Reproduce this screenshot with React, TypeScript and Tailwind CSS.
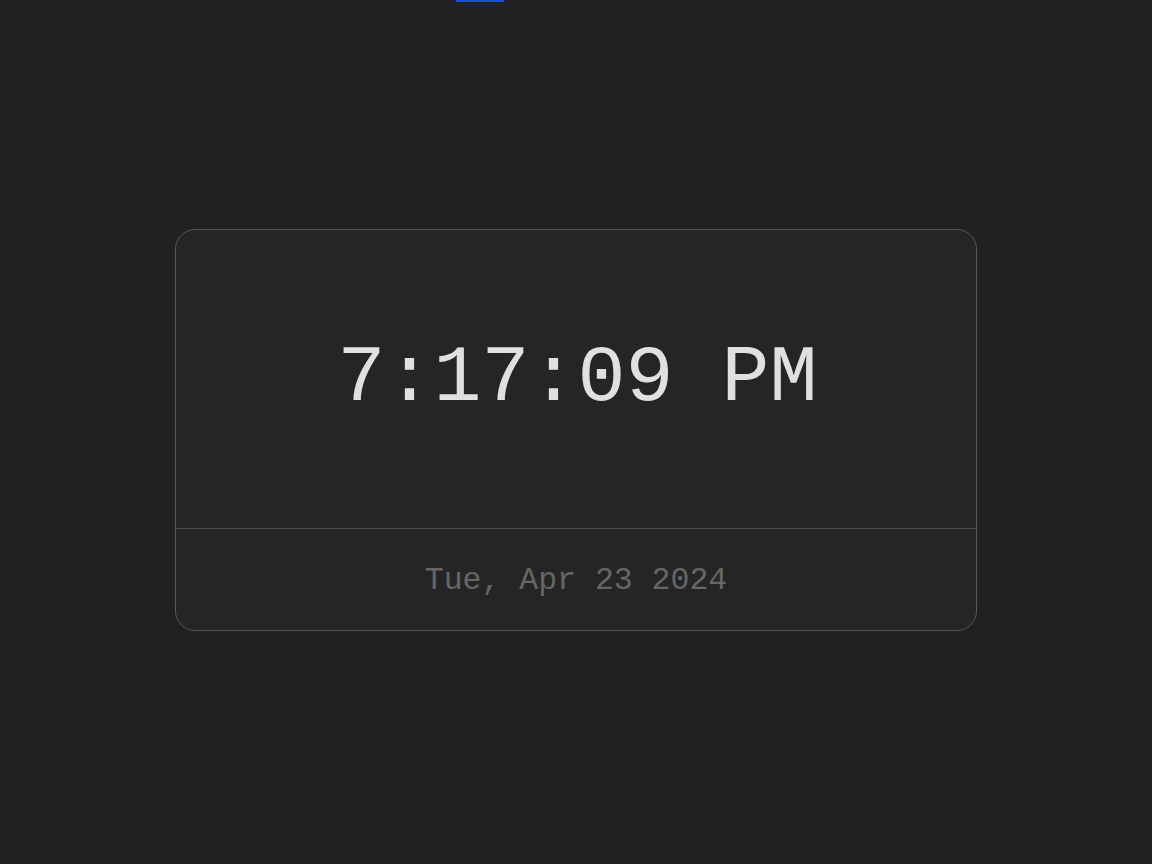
import React from 'react';

export default function App() {
  return (
    <div className="relative w-full h-[864px] bg-[#212121] flex items-center justify-center pb-[4px]">
      {/* stray focus bar at top */}
      <div className="absolute top-0 left-[456px] w-[48px] h-[2px] bg-[#1d4ed8]" />

      <div className="w-[802px] h-[402px] flex flex-col rounded-[20px] border border-[#555555] bg-[#252525] overflow-hidden">
        <div className="h-[299px] flex items-center justify-center border-b border-[#4a4a4a]">
          <span className="font-['Courier_New','Liberation_Mono',monospace] text-[80px] leading-none text-[#e0e0e0] pl-[3px]">
            7:17:09 PM
          </span>
        </div>
        <div className="flex-1 flex items-center justify-center pt-[3px]">
          <span className="font-['Courier_New','Liberation_Mono',monospace] text-[31.5px] leading-none text-[#666666]">
            Tue, Apr 23 2024
          </span>
        </div>
      </div>
    </div>
  );
}
